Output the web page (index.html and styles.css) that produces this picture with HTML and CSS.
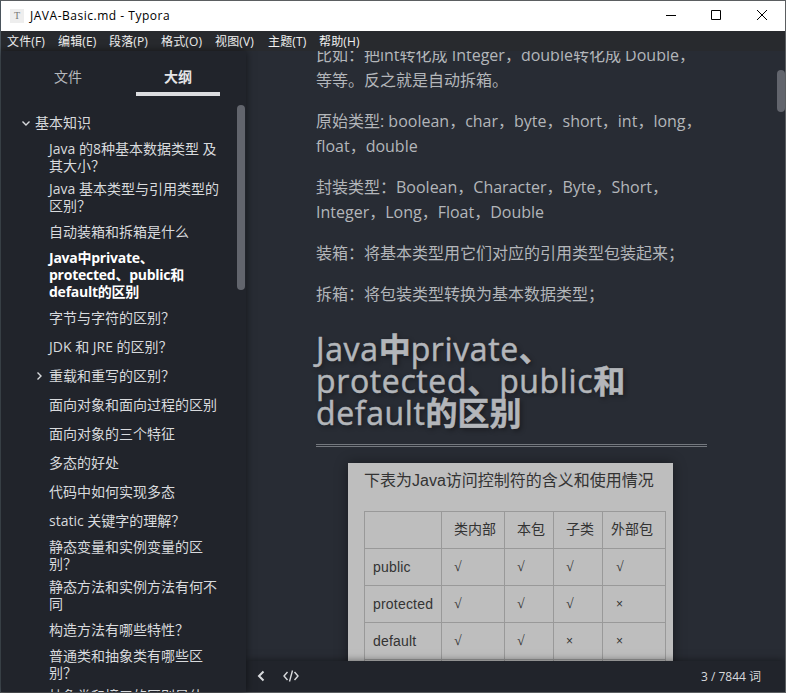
FILE: index.html
```html
<!DOCTYPE html>
<html lang="zh-CN">
<head>
<meta charset="utf-8">
<title>JAVA-Basic.md - Typora</title>
<link rel="stylesheet" href="styles.css">
</head>
<body>
<div class="window">
  <header class="titlebar">
    <span class="app-icon">T</span>
    <span class="title">JAVA-Basic.md - Typora</span>
    <div class="controls">
      <svg width="12" height="12" viewBox="0 0 12 12"><path d="M1 6.500h10"/></svg>
      <svg width="12" height="12" viewBox="0 0 12 12"><path d="M1.500 1.500h9v9h-9z"/></svg>
      <svg width="12" height="12" viewBox="0 0 12 12"><path d="M1 1l10 10M11 1L1 11"/></svg>
    </div>
  </header>
  <nav class="menubar">
    <span>文件(F)</span><span>编辑(E)</span><span>段落(P)</span><span>格式(O)</span><span>视图(V)</span><span>主题(T)</span><span>帮助(H)</span>
  </nav>
  <div class="workspace">
    <aside class="sidebar">
      <div class="tabs"><span class="tab">文件</span><span class="tab active">大纲</span></div>
      <ul class="outline">
        <li class="root"><svg class="caret" width="8" height="8" viewBox="0 0 8 8"><path d="M.5 2.500L4 6l3.500-3.500"/></svg>基本知识</li>
        <li>Java 的8种基本数据类型 及<br>其大小？</li>
        <li>Java 基本类型与引用类型的<br>区别？</li>
        <li>自动装箱和拆箱是什么</li>
        <li class="current">Java中private、<br>protected、public和<br>default的区别</li>
        <li>字节与字符的区别？</li>
        <li>JDK 和 JRE 的区别？</li>
        <li><svg class="caret" width="8" height="8" viewBox="0 0 8 8"><path d="M2.500.5L6 4L2.500 7.500"/></svg>重载和重写的区别？</li>
        <li>面向对象和面向过程的区别</li>
        <li>面向对象的三个特征</li>
        <li>多态的好处</li>
        <li>代码中如何实现多态</li>
        <li>static 关键字的理解？</li>
        <li>静态变量和实例变量的区<br>别？</li>
        <li>静态方法和实例方法有何不<br>同</li>
        <li>构造方法有哪些特性？</li>
        <li>普通类和抽象类有哪些区<br>别？</li>
        <li>抽象类和接口的区别是什<br>么？</li>
      </ul>
      <div class="side-thumb"></div>
    </aside>
    <main class="editor">
      <article class="content">
        <p>比如：把int转化成 Integer，double转化成 Double，<br>等等。反之就是自动拆箱。</p>
        <p>原始类型: boolean，char，byte，short，int，long，<br>float，double</p>
        <p>封装类型：Boolean，Character，Byte，Short，<br>Integer，Long，Float，Double</p>
        <p>装箱：将基本类型用它们对应的引用类型包装起来；</p>
        <p>拆箱：将包装类型转换为基本数据类型；</p>
        <h2>Java<b>中</b>private<b>、</b><br>protected<b>、</b>public<b>和</b><br>default<b>的区别</b></h2>
        <figure class="sheet">
          <figcaption>下表为Java访问控制符的含义和使用情况</figcaption>
          <table>
            <colgroup><col class="c1"><col class="c2"><col class="c3"><col class="c3"><col class="c2"></colgroup>
            <tr class="head"><td></td><td>类内部</td><td>本包</td><td>子类</td><td>外部包</td></tr>
            <tr><td>public</td><td>√</td><td>√</td><td>√</td><td>√</td></tr>
            <tr><td>protected</td><td>√</td><td>√</td><td>√</td><td class="no">×</td></tr>
            <tr><td>default</td><td>√</td><td>√</td><td class="no">×</td><td class="no">×</td></tr>
            <tr><td></td><td></td><td></td><td></td><td></td></tr>
          </table>
        </figure>
      </article>
      <div class="main-thumb"></div>
      <footer class="statusbar">
        <svg width="10" height="12" viewBox="0 0 10 12"><path d="M7.500 1.500L3 6l4.500 4.500" stroke-width="2"/></svg>
        <svg class="code" width="16" height="12" viewBox="0 0 16 12"><path d="M4.500 2L1 6l3.500 4M11.500 2L15 6l-3.500 4M9.500.5l-3 11" stroke-width="1.400"/></svg>
        <span class="count">3 / 7844 词</span>
      </footer>
    </main>
  </div>
</div>
</body>
</html>
```
FILE: styles.css
```css
* { box-sizing: border-box; }
body { margin: 0; font-family: "Open Sans", "Noto Sans CJK SC", sans-serif; overflow: hidden; }
svg { fill: none; stroke: currentColor; flex: none; }
.window {
  width: 786px; height: 693px; display: flex; flex-direction: column;
  border: 1px solid #5b5e61; border-left-color: #4a545c; background: #282c34;
}
.titlebar { height: 30px; flex: none; background: #fff; color: #000; display: flex; align-items: center; padding-left: 9px; font-size: 12px; }
.app-icon { width: 14px; height: 14px; background: #eee; color: #777; font: 10px/14px "Liberation Serif", serif; text-align: center; }
.title { margin-left: 6px; letter-spacing: .52px; white-space: nowrap; line-height: 16px; }
.controls { margin-left: auto; display: flex; gap: 33px; padding-right: 17px; margin-top: -2px; }
.controls svg:nth-child(-n+2) { margin-left: -1px; margin-right: 1px; }
.menubar { height: 20px; flex: none; background: #282a2e; color: #f0f0f0; display: flex; padding-left: 6px; font-size: 12px; line-height: 21px; }
.menubar span { width: 51px; white-space: nowrap; letter-spacing: .15px; }
.menubar span:nth-child(4) { width: 54px; }
.menubar span:nth-child(5) { width: 53px; }
.menubar span:nth-child(3) { width: 52px; }
.workspace { flex: 1; min-height: 0; display: flex; }
.sidebar {
  position: relative; width: 245px; flex: none; overflow: hidden; z-index: 1;
  background: #21242b; color: #d8dadd; box-shadow: 0 0 8px rgba(0,0,0,.55); font-size: 14px;
}
.tabs { display: flex; padding-left: 25px; height: 57px; }
.tab { width: 84px; height: 45px; text-align: center; line-height: 52px; color: #b5b8bc; }
.tab.active { margin-left: 26px; color: #e4e5e7; font-weight: 700; border-bottom: 4px solid #dcdde0; }
.outline { list-style: none; margin: 0; padding: 0 0 0 48px; }
.outline li { position: relative; min-height: 29px; padding: 3px 0; line-height: 17px; white-space: nowrap; display: block; }
.outline li:not(:has(br)) { padding: 6px 0; }
.outline .root { margin-left: -14px; }
.outline .current { color: #fff; font-weight: 700; letter-spacing: -.25px; }
.caret { position: absolute; left: -14px; top: 11px; stroke-width: 1.4; }
.root .caret { left: -13px; }
.side-thumb { position: absolute; left: 236px; top: 54px; width: 8px; height: 185px; border-radius: 4px; background: #62656d; }
.editor { position: relative; flex: 1; min-width: 0; overflow: hidden; display: flex; flex-direction: column; color: #b3b6ba; }
.content { flex: 1; min-height: 0; overflow: hidden; padding-left: 70px; width: 461px; }
.content p { margin: 0 0 16px; font-size: 16px; line-height: 25px; white-space: nowrap; }
.content p:first-child { margin-top: -8px; }
.content p:nth-child(n+4) { margin-bottom: 16.400px; }
.content h2 {
  margin: 26px 0 16px; font-size: 32px; line-height: 32px; font-weight: 500; white-space: nowrap; letter-spacing: .62px;
  padding-bottom: 15px; border-bottom: 3px double #74787e; color: #b3b6ba; text-shadow: 2px 2px 5px rgba(0,0,0,.4);
  -webkit-text-stroke: .5px #b3b6ba;
}
.content h2 b { font-weight: 700; letter-spacing: 0; }
.sheet { margin: 0 0 0 32px; width: 325px; height: 260px; background: #bebebe; color: #333; padding: 0 0 0 16px; box-shadow: 0 0 12px rgba(0,0,0,.4); font-family: "Liberation Sans", "Noto Sans CJK SC", sans-serif; }
.sheet figcaption { height: 48px; line-height: 35px; font-size: 16px; white-space: nowrap; }
table { border-collapse: collapse; table-layout: fixed; width: 302px; font-size: 14px; }
td { border: 1px solid #999; height: 37px; padding: 0 0 0 12px; line-height: 20px; font-family: "Liberation Serif", "Noto Sans CJK SC", serif; }
td:first-child { padding-left: 8px; font-family: "Liberation Sans", sans-serif; letter-spacing: .2px; }
td:last-child { padding-left: 13px; }
td.no { font-size: 12px; font-family: "Liberation Sans", sans-serif; }
.head td:last-child { padding-left: 8px; }
.c1 { width: 77px; } .c2 { width: 63px; } .c3 { width: 49px; }
.main-thumb { position: absolute; right: 0; top: 19px; width: 8px; height: 42px; border-radius: 4px; background: #62656d; }
.statusbar { position: relative; height: 31px; flex: none; display: flex; align-items: center; background: #21242b; color: #d8dadd; box-shadow: 0 0 8px rgba(0,0,0,.5); padding: 0 24px 1px 10px; font-size: 12px; }
.code { margin-left: 17px; }
.count { margin-left: auto; }
```
